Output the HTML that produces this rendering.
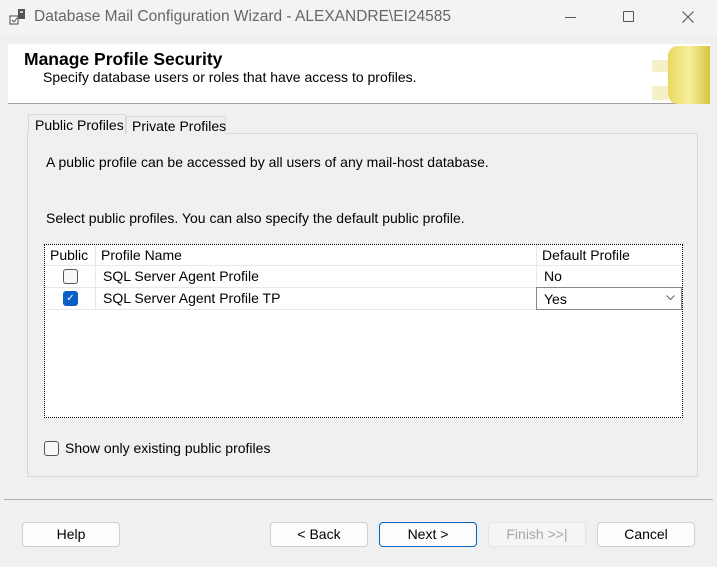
<!DOCTYPE html>
<html><head><style>
*{box-sizing:border-box}
body{margin:0;width:717px;height:567px;background:#f0f0f0;font-family:"Liberation Sans",sans-serif;font-size:14px;color:#000;position:relative;overflow:hidden}
.a{position:absolute;white-space:nowrap}
.btn{position:absolute;top:522px;height:25px;width:98px;background:#fdfdfd;border:1px solid #d0d0d0;border-radius:4px;text-align:center;line-height:23px;font-size:14px}
.cb{position:absolute;width:15px;height:15px;border:1px solid #555;border-radius:3px;background:#f8f8f8}
</style></head><body>
<div class="a" style="left:0;top:0;width:717px;height:36px;background:#f3f3f3"></div>
<svg class="a" style="left:9px;top:8px" width="18" height="18" viewBox="0 0 18 18"><rect x="1" y="8" width="8" height="8" fill="#fff" stroke="#444"/><path d="M3 12l2 2 3-4" stroke="#444" fill="none"/><rect x="9" y="1" width="7" height="10" fill="#555"/><rect x="11" y="3" width="3" height="2" fill="#ccc"/></svg>
<div class="a" style="left:34px;top:8px;font-size:15.5px;color:#666">Database Mail Configuration Wizard - ALEXANDRE\EI24585</div>
<div class="a" style="left:565px;top:17px;width:11px;height:1px;background:#555"></div>
<div class="a" style="left:623px;top:11px;width:11px;height:11px;border:1px solid #555;border-radius:1px"></div>
<svg class="a" style="left:682px;top:11px" width="12" height="12" viewBox="0 0 12 12"><path d="M0.5 0.5L11.5 11.5M11.5 0.5L0.5 11.5" stroke="#555" stroke-width="1.1"/></svg>
<div class="a" style="left:8px;top:44px;width:702px;height:60px;background:#fff;border-bottom:1px solid #a0a0a0"></div>
<div class="a" style="left:24px;top:49px;font-size:17.5px;font-weight:bold">Manage Profile Security</div>
<div class="a" style="left:43px;top:69px;font-size:14px">Specify database users or roles that have access to profiles.</div>
<div class="a" style="left:668px;top:46px;width:42px;height:58px;background:linear-gradient(90deg,#e8d860,#f7ef9a 50%,#d8c440);border-radius:10px 0 0 10px"></div>
<div class="a" style="left:652px;top:60px;width:16px;height:12px;background:#f4f0c8"></div>
<div class="a" style="left:652px;top:86px;width:16px;height:14px;background:#f4f0c8"></div>
<div class="a" style="left:27px;top:133px;width:671px;height:344px;border:1px solid #d8d8d8;background:#f0f0f0"></div>
<div class="a" style="left:28px;top:114px;width:98px;height:20px;background:#f0f0f0;border:1px solid #d8d8d8;border-bottom:none;padding:2px 0 0 6px">Public Profiles</div>
<div class="a" style="left:126px;top:116px;width:100px;height:18px;background:#f0f0f0;border:1px solid #d8d8d8;border-bottom:none;padding:1px 0 0 5px">Private Profiles</div>
<div class="a" style="left:46px;top:154px">A public profile can be accessed by all users of any mail-host database.</div>
<div class="a" style="left:46px;top:210px">Select public profiles. You can also specify the default public profile.</div>
<div class="a" style="left:44px;top:244px;width:639px;height:174px;background:#fff;border:1px dotted #000"></div>
<div class="a" style="left:50px;top:247px">Public</div>
<div class="a" style="left:101px;top:247px">Profile Name</div>
<div class="a" style="left:542px;top:247px">Default Profile</div>
<div class="a" style="left:45px;top:265px;width:637px;height:1px;background:#e8e8e8"></div>
<div class="a" style="left:45px;top:287px;width:637px;height:1px;background:#e8e8e8"></div>
<div class="a" style="left:45px;top:309px;width:637px;height:1px;background:#e8e8e8"></div>
<div class="a" style="left:95px;top:245px;width:1px;height:65px;background:#e8e8e8"></div>
<div class="a" style="left:536px;top:245px;width:1px;height:65px;background:#e8e8e8"></div>
<div class="cb" style="left:63px;top:269px"></div>
<div class="cb" style="left:63px;top:291px;background:#0a5fc4;border-color:#0a5fc4;color:#fff;font-size:10px;line-height:13px;text-align:center">✓</div>
<div class="a" style="left:103px;top:268px">SQL Server Agent Profile</div>
<div class="a" style="left:103px;top:290px">SQL Server Agent Profile TP</div>
<div class="a" style="left:544px;top:268px">No</div>
<div class="a" style="left:536px;top:287px;width:146px;height:23px;border:1px solid #888;background:#fff;padding:3px 0 0 7px">Yes<svg style="position:absolute;right:6px;top:7px" width="9" height="6" viewBox="0 0 9 6"><path d="M0.5 0.5L4.5 4.5L8.5 0.5" stroke="#666" fill="none"/></svg></div>
<div class="cb" style="left:44px;top:441px"></div>
<div class="a" style="left:65px;top:440px">Show only existing public profiles</div>
<div class="a" style="left:4px;top:499px;width:709px;height:1px;background:#b0b0b0"></div>
<div class="btn" style="left:22px">Help</div>
<div class="btn" style="left:270px">&lt; Back</div>
<div class="btn" style="left:379px;border-color:#0067c0">Next &gt;</div>
<div class="btn" style="left:488px;color:#a8a8a8;background:#f5f5f5;border-color:#e5e5e5">Finish &gt;&gt;|</div>
<div class="btn" style="left:597px">Cancel</div>
</body></html>
